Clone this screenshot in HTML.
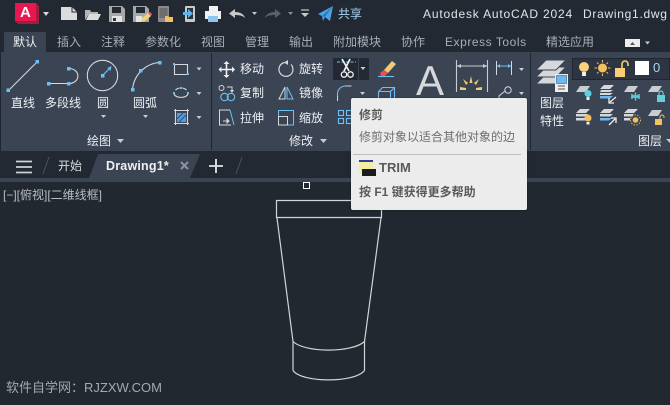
<!DOCTYPE html>
<html lang="zh">
<head>
<meta charset="utf-8">
<title>AutoCAD 2024</title>
<style>
html,body{margin:0;padding:0;background:#212830}
#app{position:relative;width:670px;height:405px;overflow:hidden;background:#212830;font-family:"Liberation Sans","Noto Sans CJK SC",sans-serif;font-size:12px;color:#e6e6e6}
.b{position:absolute}
.t{position:absolute;white-space:nowrap;line-height:16px;height:16px}
.tab{color:#a9aeb6;top:34px}
.rb{color:#eceff3}
svg{position:absolute;left:0;top:0}
#tip{position:absolute;left:351px;top:98px;width:176px;height:112px;background:#ececec;border-radius:2px;box-shadow:0 0 2px rgba(0,0,0,.35)}
#tip .t{color:#5a5a5a}
</style>
</head>
<body>
<div id="app">
  <div class="b" style="left:0;top:0;width:670px;height:52px;background:#222933"></div>
  <div class="b" style="left:4px;top:32px;width:42px;height:20px;background:#3b4453"></div>
  <div class="b" style="left:0;top:52px;width:670px;height:99px;background:#3b4453"></div>
  <div class="b" style="left:0;top:151px;width:670px;height:27px;background:#222933"></div>
  <div class="b" style="left:0;top:178px;width:670px;height:4px;background:#3b4453"></div>
  <div class="b" style="left:211px;top:53px;width:1px;height:97px;background:#20262f"></div>
  <div class="b" style="left:530px;top:53px;width:1px;height:97px;background:#20262f"></div>
  <div class="b" style="left:0;top:52px;width:1px;height:99px;background:#20262f"></div>
  <div class="b" style="left:333px;top:58px;width:36px;height:22px;background:#222933"></div>
  <div class="b" style="left:358px;top:58px;width:1px;height:22px;background:#3b4453"></div>
  <div class="b" style="left:572px;top:58px;width:98px;height:22px;background:#2d3543;border:1px solid #20262f;box-sizing:border-box"></div>

  <svg width="670" height="405" viewBox="0 0 670 405" fill="none">
    <!-- file tab -->
    <path d="M89 178L98 154H200L190 178Z" fill="#3b4453"/>
    <path d="M43 174L49 157M236 174L242 157" stroke="#4a5260" stroke-width="1"/>

    <!-- QAT -->
    <path d="M15 21V3h21l3 3v18H18z" fill="#a51d3c"/>
    <rect x="15" y="3" width="21" height="18" fill="#e8174f"/>
    <path d="M43 12h6l-3 4z" fill="#d8d8d8"/>
    <path d="M61 7h11l5 5v8H61z" fill="#dcdcdc"/>
    <path d="M72 7v5h5" stroke="#222933"/>
    <path d="M85 20V10h5l1 2h7v2h-9l-4 6z" fill="#b5b5b5"/><path d="M86 20l3-6h12l-3 6z" fill="#dcdcdc"/>
    <path d="M109 6h13l3 3v13h-16z" fill="#a8a8a8"/><rect x="112" y="7" width="9" height="6" fill="#222933"/><rect x="112" y="16" width="10" height="6" fill="#e4e4e4"/><rect x="113" y="18" width="3" height="3" fill="#333"/>
    <path d="M133 6h13l3 3v13h-16z" fill="#a8a8a8"/><rect x="136" y="7" width="9" height="6" fill="#222933"/><rect x="136" y="16" width="6" height="6" fill="#e4e4e4"/>
    <path d="M141 22l1-4 6-5 3 3-6 5z" fill="#f5d27a"/><path d="M148 13l2-1 2 2-1 2z" fill="#e8567a"/>
    <rect x="158" y="6" width="11" height="16" rx="1" fill="#8a8a8a"/><rect x="159.500" y="8" width="8" height="10" fill="#6d6d6d"/>
    <path d="M165 16h3l1 1h4v5h-8z" fill="#f1c061"/>
    <rect x="185" y="6" width="10" height="16" rx="1" fill="#c9c9c9"/><rect x="187" y="8" width="6" height="11" fill="#2b323d"/>
    <path d="M183 12h5v-3l5 4.500-5 4.500v-3h-5z" fill="#5bb3f0"/>
    <path d="M209 6h9v5h-9z" fill="#f1f1f1"/><path d="M205 11h16v8h-16z" fill="#f1f1f1"/><rect x="208" y="16" width="10" height="6" fill="#8cc7ee"/>
    <path d="M229 13.500l6-4.500v3c5 0 9 2 10 6-2-2-5-3-10-3v3z" fill="#c9c9c9"/>
    <path d="M252 12h5l-2.500 3z" fill="#c9c9c9"/>
    <path d="M281 13.500l-6-4.500v3c-5 0-9 2-10 6 2-2 5-3 10-3v3z" fill="#5a5f68"/>
    <path d="M288 12h5l-2.500 3z" fill="#8a8d92"/>
    <path d="M301 10h8" stroke="#c9c9c9" stroke-width="1.200"/><path d="M301 13h8l-4 4z" fill="#c9c9c9"/>
    <path d="M318 14L333 6l-3 15-5-4-2 4-1-5z" fill="#4ba3e6"/><path d="M322 16l11-10-8 11z" fill="#2d77b8"/>

    <!-- tab toggler -->
    <rect x="625" y="39" width="15" height="8" fill="#eee"/><path d="M630 45h5l-2.500-3z" fill="#555"/>
    <path d="M645 41.500h5l-2.500 3z" fill="#c9c9c9"/>

    <!-- draw panel -->
    <g stroke="#d6d8db" stroke-width="1.100">
      <path d="M8.500 90.500L37.500 61.500"/>
      <path d="M48.500 83.500H68.500M68.500 68.500C81 68.500 81 83.500 68.500 83.500"/>
      <circle cx="102.500" cy="75.500" r="15.200"/>
      <path d="M132.500 89.500C134 74 146 63.500 159.500 62.500"/>
      <path d="M174.500 64.500H187.500V74.500H174.500Z"/>
      <path d="M174 94C176 98.500 186 98.500 188 94M175.500 90C176.500 88.900 178 88.300 179.500 88M182.500 88C184 88.300 185.500 88.900 186.500 90"/>
      <path d="M174 110.500H189M174 123.500H189M175.500 109V125M187.500 109V125"/>
    </g>
    <path d="M103 75L110.500 67.500" stroke="#6cc0f8" stroke-width="1.200"/><path d="M111.500 66l-1 5-3-3z" fill="#6cc0f8"/>
    <path d="M177 113h9v9h-9z" fill="#4f9fe0"/><path d="M177 119l6-6M179 122l7-7" stroke="#2f4f78"/>
    <g fill="#6cc0f8">
      <rect x="6.500" y="88.500" width="3.500" height="3.500"/><rect x="35.500" y="60" width="3.500" height="3.500"/>
      <rect x="47" y="82" width="3.500" height="3.500"/><rect x="67" y="82" width="3.500" height="3.500"/><rect x="67" y="67" width="3.500" height="3.500"/>
      <rect x="101" y="74" width="3.500" height="3.500"/>
      <rect x="131" y="88" width="3.500" height="3.500"/><rect x="139" y="69" width="3.500" height="3.500"/><rect x="158" y="61" width="3.500" height="3.500"/>
      <rect x="173" y="63" width="2" height="2"/><rect x="187" y="73" width="2" height="2"/>
      <rect x="173" y="92" width="2" height="2"/><rect x="180" y="87" width="2" height="2"/><rect x="187" y="92" width="2" height="2"/>
    </g>
    <g fill="#c9ccd0">
      <path d="M196.500 67.500h5l-2.500 3zM196.500 92h5l-2.500 3zM196.500 116h5l-2.500 3zM101 115h5l-2.500 3zM143 115h5l-2.500 3zM117 139h7l-3.500 4zM320 139h7l-3.500 4zM666 139h4v4zM360.500 67h5l-2.500 3zM360 92h5l-2.500 3zM519 68h5l-2.500 3zM519 92h5l-2.500 3z"/>
    </g>

    <!-- modify panel -->
    <path d="M226.500 62v15M219.500 69.500h15" stroke="#f0f0f0" stroke-width="1.600"/>
    <path d="M226.500 61l-3 3h6zM226.500 78l-3-3h6zM218.500 69.500l3-3v6zM235 69.500l-3-3v6z" fill="#f0f0f0"/>
    <path d="M284.500 62.500a7 7 0 1 0 6.500 2" stroke="#d6d8db" stroke-width="1.200"/><path d="M288 60v5l-4-2.500z" fill="#d6d8db"/>
    <path d="M337 62h19" stroke="#6cc0f8" stroke-dasharray="3 1.500"/>
    <path d="M342 59l7 12M350 59l-6 12" stroke="#f2f2f2" stroke-width="1.700"/>
    <circle cx="344" cy="74.500" r="2.700" stroke="#f2f2f2" stroke-width="1.300"/><circle cx="350.500" cy="74.500" r="2.700" stroke="#f2f2f2" stroke-width="1.300"/>
    <path d="M384 70L392 61L396 64L388 73Z" fill="#f1cb74"/><path d="M380 73l4-3 4 3-3 3h-4z" fill="#e5534b"/><path d="M378 76.500h16" stroke="#6cc0f8" stroke-width="1.100"/>
    <circle cx="221.500" cy="88" r="2.500" stroke="#d6d8db"/><path d="M227 87h5v4" stroke="#d6d8db"/><path d="M230 90h4l-2 3z" fill="#d6d8db"/>
    <circle cx="224.500" cy="97" r="3.700" stroke="#6cc0f8" stroke-width="1.100"/><circle cx="231" cy="97" r="3.700" stroke="#6cc0f8" stroke-width="1.100"/>
    <path d="M285 87v12h-6z" stroke="#d6d8db"/><path d="M287 87v12h6z" stroke="#6cc0f8"/>
    <path d="M337.500 101V96" stroke="#d6d8db"/><path d="M337.500 96v-2c0-5 4-8 8-8" stroke="#6cc0f8" stroke-width="1.100"/><path d="M345.500 86h6" stroke="#d6d8db"/>
    <path d="M378.500 91.500h12v11M378.500 91.500v12M378.500 91.500l4-4h12v12l-4 3M390.500 91.500l4-4" stroke="#6cc0f8" stroke-width="1.100"/>
    <path d="M231 125h-11.500v-15H230" stroke="#d6d8db"/><path d="M230 110l4 15" stroke="#6cc0f8"/><path d="M223 121h6M229 121l-2-2v4z" stroke="#d6d8db"/>
    <rect x="278.500" y="110.500" width="15" height="14.500" stroke="#6cc0f8"/><rect x="278.500" y="116.500" width="9" height="8.500" stroke="#d6d8db" fill="#3b4453"/>
    <g stroke="#6cc0f8" stroke-width="1.100"><rect x="338.500" y="110.500" width="5" height="5"/><rect x="346.500" y="110.500" width="5" height="5"/><rect x="338.500" y="118.500" width="5" height="5"/><rect x="346.500" y="118.500" width="5" height="5"/></g>

    <!-- annotate -->
    <path d="M456.500 60v32M487.500 60v32M457 66h30" stroke="#c9ccd0" stroke-width="1.100"/>
    <path d="M457 66l4-2v4zM487 66l-4-2v4z" fill="#c9ccd0"/>
    <g fill="#f1cb74"><path d="M471 76l1.500 7h-3zM460 87l6 1v2h-6zM482 87l-6 1v2h6zM463 79l5 4-2 2zM479 79l-5 4 2 2z"/></g>
    <path d="M496.500 61v14M511.500 61v14" stroke="#d6d8db"/><path d="M497 66h14" stroke="#6cc0f8"/><path d="M497 66l3-2v4zM511 66l-3-2v4z" fill="#6cc0f8"/>
    <circle cx="508" cy="90" r="3.200" stroke="#d6d8db"/><path d="M505 91l-6 5v3" stroke="#d6d8db"/>

    <!-- layers big icon -->
    <g fill="#d6d8db" stroke="#3b4453" stroke-width="1">
      <path d="M546 74H566L556 84H536Z"/>
      <path d="M546 67H566L556 77H536Z"/>
      <path d="M546 60H566L556 70H536Z"/>
    </g>
    <rect x="555" y="74" width="13" height="18" fill="#eee"/><rect x="556.500" y="75.500" width="10" height="8" fill="#6cb8f3" stroke="#2b5f8f" stroke-width=".6"/>
    <path d="M558 86h7M558 89h7" stroke="#555"/>

    <!-- layer combo -->
    <circle cx="584" cy="67" r="5" fill="#f9d27a"/><rect x="582" y="72" width="4" height="4" fill="#eee"/>
    <circle cx="602.500" cy="68" r="4.500" fill="#f1c061"/>
    <path d="M602.500 60v2.500M602.500 73.500v2.500M594.500 68h2.500M608 68h2.500M597 62.500l1.500 1.500M608 62.500l-1.500 1.500M597 73.500l1.500-1.500M608 73.500l-1.500-1.500" stroke="#f1c061"/>
    <rect x="615" y="68" width="10" height="9" fill="#f9cd75"/><path d="M622 68v-4a3 3 0 0 1 6 0v2" stroke="#f9cd75" stroke-width="1.600"/>
    <rect x="635" y="61" width="14" height="14" fill="#fff"/>

    <!-- layer icons row 1 -->
    <g fill="#c9ccd0">
      <path d="M580 86H590L586 92H576Z"/>
      <path d="M628 86H638L634 92H624Z"/>
      <path d="M652 86H662L658 92H648Z"/>
      <path d="M652 110H662L658 116H648Z"/>
    </g>
    <g fill="#d6d8db">
      <path d="M604 85H614L610 89H600Z"/><path d="M601 90H613L610 92H600Z"/>
    </g>
    <path d="M600 93H613L610 95H600Z" fill="#d6d8db"/>
    <path d="M600 96H613L610 98.500H600Z" fill="#6cb8f3"/>
    <!-- stacks row 2 -->
    <g fill="#d6d8db">
      <path d="M580 109H590L586 113H576Z"/><path d="M576 114H588L586 116.500H576Z"/><path d="M576 118H586V120.500H576Z"/>
      <path d="M604 109H614L610 113H600Z"/><path d="M600 114H613L610 116.500H600Z"/>
      <path d="M628 109H638L634 113H624Z"/><path d="M624 114H634L632 116.500H624Z"/><path d="M624 118H630V120.500H624Z"/>
    </g>
    <path d="M600 118H612L609 120.500H600Z" fill="#6cb8f3"/>
    <circle cx="588" cy="93.500" r="3.500" fill="#5cd0dc"/><rect x="586.500" y="97" width="3" height="3" fill="#eee"/>
    <path d="M610 102l6-5M609 98v5h5" stroke="#eee" stroke-width="1.300"/>
    <path d="M635.500 92.500v8M631 94.500l9 4M640 94.500l-9 4M631 96.500h9" stroke="#5cc7d6" stroke-width="1.500"/>
    <rect x="657" y="95" width="8" height="7" fill="#66cfd8"/><path d="M659 95v-2a2 2 0 0 1 4 0v2" stroke="#66cfd8" stroke-width="1.200"/>
    <circle cx="588" cy="118" r="3.500" fill="#f1c061"/><rect x="586.500" y="122" width="3" height="2.500" fill="#eee"/>
    <path d="M609 125l6-6M611 118h5v5" stroke="#eee" stroke-width="1.300"/>
    <circle cx="635.500" cy="120" r="2.800" fill="#f1c061"/><circle cx="635.500" cy="120" r="5" stroke="#f1c061" stroke-dasharray="1.300 1.500"/>
    <rect x="655" y="119" width="7" height="6" fill="#f1c061"/><path d="M660 119v-2a2 2 0 0 1 4 0v1" stroke="#f1c061"/>

    <!-- file tab icons -->
    <path d="M16 161.500H32M16 167H32M16 172.500H32" stroke="#d0d2d5" stroke-width="1.800"/>
    <path d="M181 162l7 7M188 162l-7 7" stroke="#8e939b" stroke-width="2"/>
    <path d="M216 159v14M209 166h14" stroke="#e6e6e6" stroke-width="1.800"/>

    <!-- drawing -->
    <g stroke="#d2d4d6" stroke-width="1.200" fill="none">
      <rect x="303.500" y="182.500" width="6" height="6" stroke="#fff" stroke-width="1"/>
      <path d="M276.500 217.500V200.500H381.500V217.500H276.500Z"/>
      <path d="M277 218L293 341.500M381 218L364.500 341.500"/>
      <path d="M293 341.500C305 353 352 353 364.500 341.500"/>
      <path d="M293 341.500V370.500M364.500 341.500V370.500"/>
      <path d="M293 370.500C302 383 355 383 364.500 370.500"/>
    </g>
  </svg>

  <!-- QAT text -->
  <div class="t" style="left:20px;top:5px;color:#fff;font-weight:bold;font-size:15px">A</div>
  <div class="t" style="left:338px;top:6px;color:#a8d4f2">共享</div>
  <div class="t" style="left:423px;top:6px;letter-spacing:.82px;color:#e2e4e8">Autodesk AutoCAD 2024</div>
  <div class="t" style="left:583px;top:6px;letter-spacing:.72px;color:#e2e4e8">Drawing1.dwg</div>

  <!-- tabs -->
  <div class="t" style="left:13px;top:34px;color:#f0f0f0">默认</div>
  <div class="t tab" style="left:57px">插入</div>
  <div class="t tab" style="left:101px">注释</div>
  <div class="t tab" style="left:145px">参数化</div>
  <div class="t tab" style="left:201px">视图</div>
  <div class="t tab" style="left:245px">管理</div>
  <div class="t tab" style="left:289px">输出</div>
  <div class="t tab" style="left:333px">附加模块</div>
  <div class="t tab" style="left:401px">协作</div>
  <div class="t tab" style="left:445px;letter-spacing:.55px">Express Tools</div>
  <div class="t tab" style="left:546px">精选应用</div>

  <!-- ribbon labels -->
  <div class="t rb" style="left:11px;top:95px">直线</div>
  <div class="t rb" style="left:45px;top:95px">多段线</div>
  <div class="t rb" style="left:97px;top:95px">圆</div>
  <div class="t rb" style="left:133px;top:95px">圆弧</div>
  <div class="t rb" style="left:87px;top:133px">绘图</div>
  <div class="t rb" style="left:240px;top:61px">移动</div>
  <div class="t rb" style="left:299px;top:61px">旋转</div>
  <div class="t rb" style="left:240px;top:85px">复制</div>
  <div class="t rb" style="left:299px;top:85px">镜像</div>
  <div class="t rb" style="left:240px;top:110px">拉伸</div>
  <div class="t rb" style="left:299px;top:110px">缩放</div>
  <div class="t rb" style="left:289px;top:133px">修改</div>
  <div class="t" style="left:416px;top:66px;height:30px;line-height:30px;font-size:42px;color:#d6d8db">A</div>
  <div class="t rb" style="left:540px;top:95px">图层</div>
  <div class="t rb" style="left:540px;top:113px">特性</div>
  <div class="t rb" style="left:638px;top:133px">图层</div>
  <div class="t" style="left:653px;top:60px;font-size:13px;color:#a8d4f2">0</div>

  <!-- file tabs -->
  <div class="t" style="left:58px;top:158px;color:#d8dade">开始</div>
  <div class="t" style="left:106px;top:158px;font-weight:bold;font-size:12.500px;letter-spacing:.2px;color:#f0f0f0">Drawing1*</div>

  <!-- viewport -->
  <div class="t" style="left:3px;top:187px;color:#b9bdc2">[−][俯视][二维线框]</div>
  <div class="t" style="left:6px;top:380px;font-size:13px;color:#a6a9ad">软件自学网：RJZXW.COM</div>

  <!-- tooltip -->
  <div id="tip">
    <div class="t" style="left:8px;top:9px;font-weight:bold">修剪</div>
    <div class="t" style="left:8px;top:31px;color:#6e6e6e">修剪对象以适合其他对象的边</div>
    <div class="b" style="left:2px;top:56px;width:168px;height:1px;background:#bdbdbd"></div>
    <div class="b" style="left:8px;top:62px;width:14px;height:13px;background:#f4eda0;border-top:2px solid #2b3f9a;box-sizing:border-box"></div>
    <div class="b" style="left:11px;top:71px;width:14px;height:7px;background:#1c1c1c"></div>
    <div class="t" style="left:28px;top:62px;font-weight:bold;font-size:13px">TRIM</div>
    <div class="t" style="left:8px;top:86px;font-weight:bold">按 F1 键获得更多帮助</div>
  </div>
</div>
</body>
</html>
